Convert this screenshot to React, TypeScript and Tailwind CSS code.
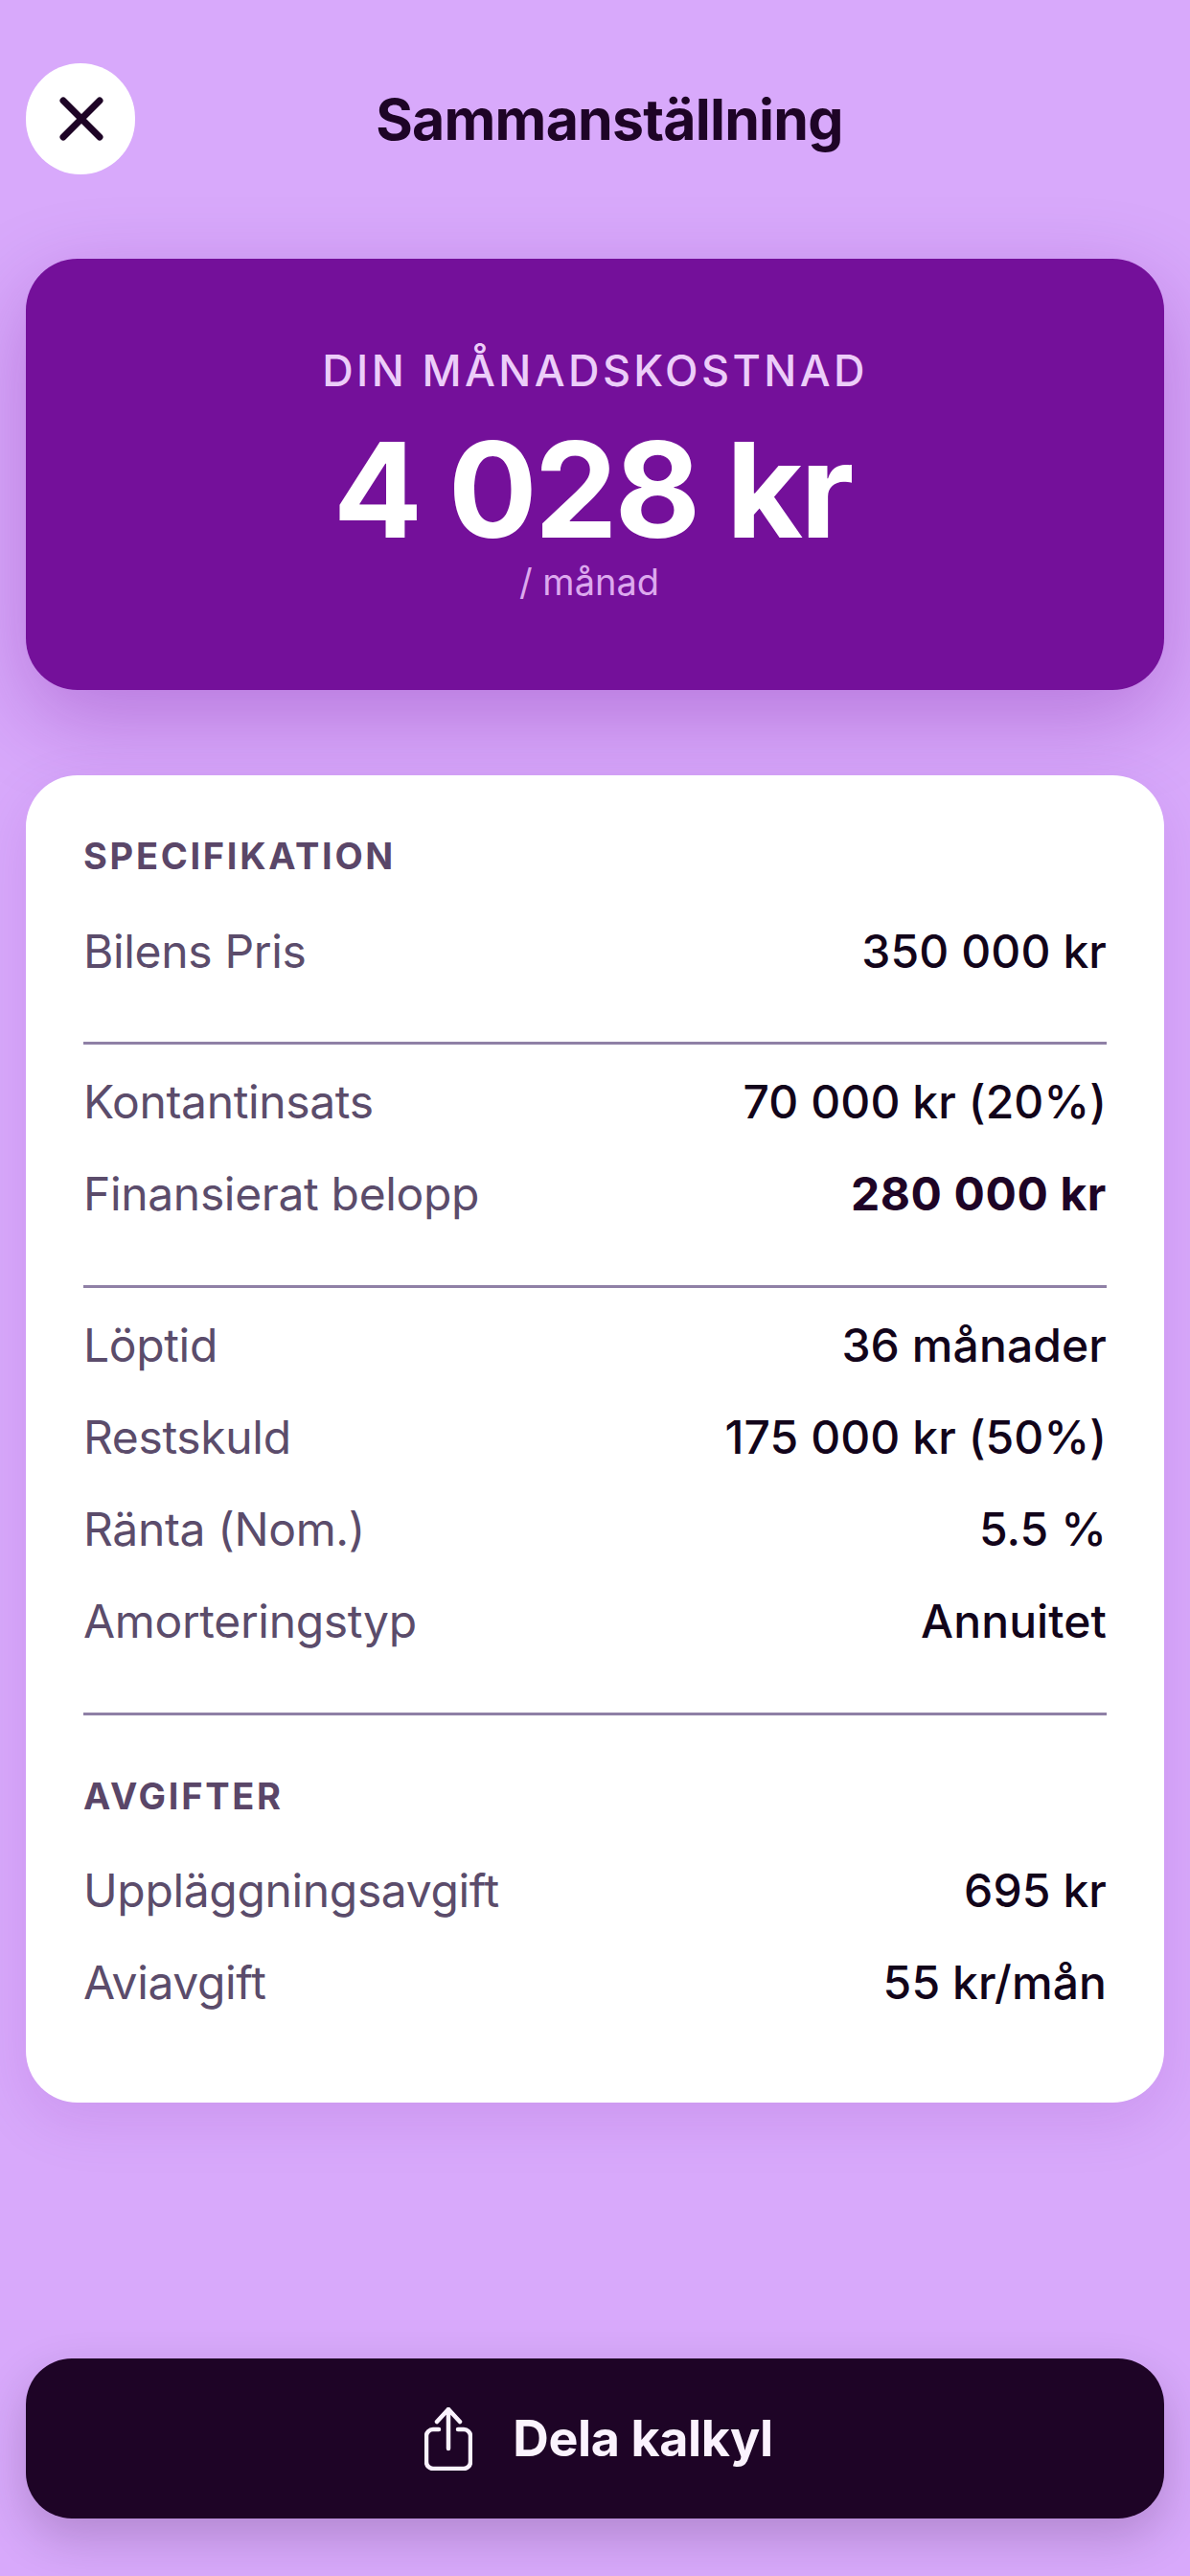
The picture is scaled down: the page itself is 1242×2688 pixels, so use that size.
const font = { fontFamily: "Inter, 'Liberation Sans', sans-serif" };

const Row = ({ label, value, bold }: { label: string; value: string; bold?: boolean }) => (
  <div className="flex h-[96px] items-center justify-between">
    <span className="text-[48px] font-normal tracking-[-0.35px] text-[#5b4c6b]">{label}</span>
    <span className={`text-[48px] ${bold ? "font-bold tracking-[0.6px] text-[#1e0426]" : "font-medium tracking-[0.1px] text-[#12041a]"}`}>
      {value}
    </span>
  </div>
);

const Heading = ({ children }: { children: string }) => (
  <h2 className="h-[48px] text-[38px] leading-[48px] font-bold tracking-[2.7px] text-[#5a4668]">{children}</h2>
);

const Divider = () => <div className="h-[3px] bg-[#8f80a6]" />;

export default function App() {
  return (
    <div style={font} className="flex h-[2688px] w-[1242px] flex-col bg-[#d8a9fb] px-[27px] pt-[66px]">
      <header className="relative flex h-[116px] items-center justify-center pl-[30px]">
        <button className="absolute left-0 top-0 flex h-[116px] w-[114px] items-center justify-center rounded-full bg-white">
          <svg width="46" height="46" viewBox="0 0 46 46" fill="none" stroke="#1e0426" strokeWidth="7" strokeLinecap="round" className="ml-[2px]">
            <path d="M4 4 L42 42 M42 4 L4 42" />
          </svg>
        </button>
        <h1 className="text-[59px] leading-none font-bold tracking-[-0.8px] text-[#1e0426]">Sammanställning</h1>
      </header>

      <section className="mt-[88px] flex h-[450px] flex-col items-center rounded-[54px] bg-[#74109a] pt-[90px] shadow-[0_30px_90px_rgba(116,16,154,0.32)]">
        <p className="text-[45px] leading-[54px] font-medium tracking-[3.4px] text-[#eccdf9]">DIN MÅNADSKOSTNAD</p>
        <p className="mt-[24px] mr-[6px] text-[138px] leading-[146px] font-bold tracking-[-3px] text-white">4 028 kr</p>
        <p className="mr-[12px] text-[38px] leading-[46px] font-normal text-[#dca9ee]">/ månad</p>
      </section>

      <section className="mt-[89px] flex flex-col rounded-[54px] bg-white px-[60px] pt-[60px] pb-[77px] shadow-[0_20px_60px_rgba(116,16,154,0.12)]">
        <Heading>SPECIFIKATION</Heading>
        <div className="mt-[28px]">
          <Row label="Bilens Pris" value="350 000 kr" />
        </div>
        <div className="mt-[46px]">
          <Divider />
        </div>
        <div className="mt-[12px]">
          <Row label="Kontantinsats" value="70 000 kr (20%)" />
          <Row label="Finansierat belopp" value="280 000 kr" bold />
        </div>
        <div className="mt-[47px]">
          <Divider />
        </div>
        <div className="mt-[12px]">
          <Row label="Löptid" value="36 månader" />
          <Row label="Restskuld" value="175 000 kr (50%)" />
          <Row label="Ränta (Nom.)" value="5.5 %" />
          <Row label="Amorteringstyp" value="Annuitet" />
        </div>
        <div className="mt-[47px]">
          <Divider />
        </div>
        <div className="mt-[60px]">
          <Heading>AVGIFTER</Heading>
        </div>
        <div className="mt-[27px]">
          <Row label="Uppläggningsavgift" value="695 kr" />
          <Row label="Aviavgift" value="55 kr/mån" />
        </div>
      </section>

      <button className="mt-[267px] flex h-[167px] items-center justify-center gap-[42px] rounded-[48px] bg-[#1e0426] pl-[8px] shadow-[0_20px_50px_rgba(30,4,38,0.2)]">
        <svg width="50" height="66" viewBox="0 0 50 66" fill="none" stroke="#fbf3fe" strokeWidth="4.5" strokeLinecap="round" strokeLinejoin="round">
          <path d="M15 23 H9 A7 7 0 0 0 2 30 V57 A7 7 0 0 0 9 64 H41 A7 7 0 0 0 48 57 V30 A7 7 0 0 0 41 23 H35" />
          <path d="M25 43 V2 M13 15 L25 2 L37 15" />
        </svg>
        <span className="text-[52px] leading-none font-bold tracking-[-0.4px] text-[#fbf3fe]">Dela kalkyl</span>
      </button>
    </div>
  );
}
